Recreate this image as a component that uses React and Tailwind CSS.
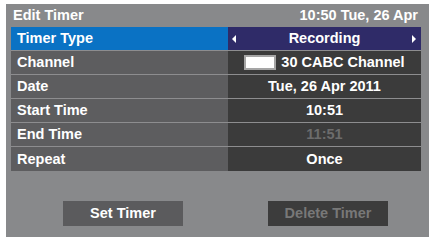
import React from "react";

const rows = [
  { label: "Timer Type", value: "Recording", selected: true },
  { label: "Channel", value: "30 CABC Channel", channel: true },
  { label: "Date", value: "Tue, 26 Apr 2011" },
  { label: "Start Time", value: "10:51" },
  { label: "End Time", value: "11:51", disabled: true },
  { label: "Repeat", value: "Once" },
];

export default function App() {
  return (
    <div
      className="w-[429px] h-[240px] bg-white overflow-hidden"
      style={{ fontFamily: '"Liberation Sans", Arial, sans-serif' }}
    >
      <div className="ml-[6px] mt-[4px] w-[423px] h-[233px] bg-[#88898b] flex flex-col font-bold text-white text-[14.5px] leading-none">
        <div className="h-[23px] flex items-center justify-between pl-[7px] pr-[11px]">
          <span>Edit Timer</span>
          <span>10:50 Tue, 26 Apr</span>
        </div>
        <div className="ml-[5px] w-[410px] flex flex-col">
          {rows.map((r, i) => (
            <div
              key={r.label}
              className={`flex h-[24px] ${i < rows.length - 1 ? "border-b border-[#8d8d8f]" : ""}`}
            >
              <div
                className={`w-[217px] flex items-center pl-[6px] ${r.selected ? "bg-[#0a72c4]" : "bg-[#5d5d5f]"}`}
              >
                {r.label}
              </div>
              <div
                className={`relative flex-1 flex items-center justify-center ${r.selected ? "bg-[#2f2b68]" : "bg-[#3b3b3b]"} ${r.disabled ? "text-[#6c6c6c]" : ""}`}
              >
                {r.selected && (
                  <>
                    <span className="absolute left-[4px] top-1/2 -translate-y-1/2 w-0 h-0 border-y-[4px] border-y-transparent border-r-[4px] border-r-white" />
                    <span className="absolute right-[5px] top-1/2 -translate-y-1/2 w-0 h-0 border-y-[4px] border-y-transparent border-l-[4px] border-l-white" />
                  </>
                )}
                {r.channel && (
                  <span className="w-[32px] h-[15px] bg-white border-2 border-[#a5a5a5] mr-[5px]" />
                )}
                <span>{r.value}</span>
              </div>
            </div>
          ))}
        </div>
        <div className="flex mt-[30px]">
          <div className="ml-[57px] w-[120px] h-[25px] bg-[#5b5b5d] flex items-center justify-center">
            Set Timer
          </div>
          <div className="ml-[85px] w-[120px] h-[25px] bg-[#3c3c3c] text-[#787878] flex items-center justify-center">
            Delete Timer
          </div>
        </div>
      </div>
    </div>
  );
}
